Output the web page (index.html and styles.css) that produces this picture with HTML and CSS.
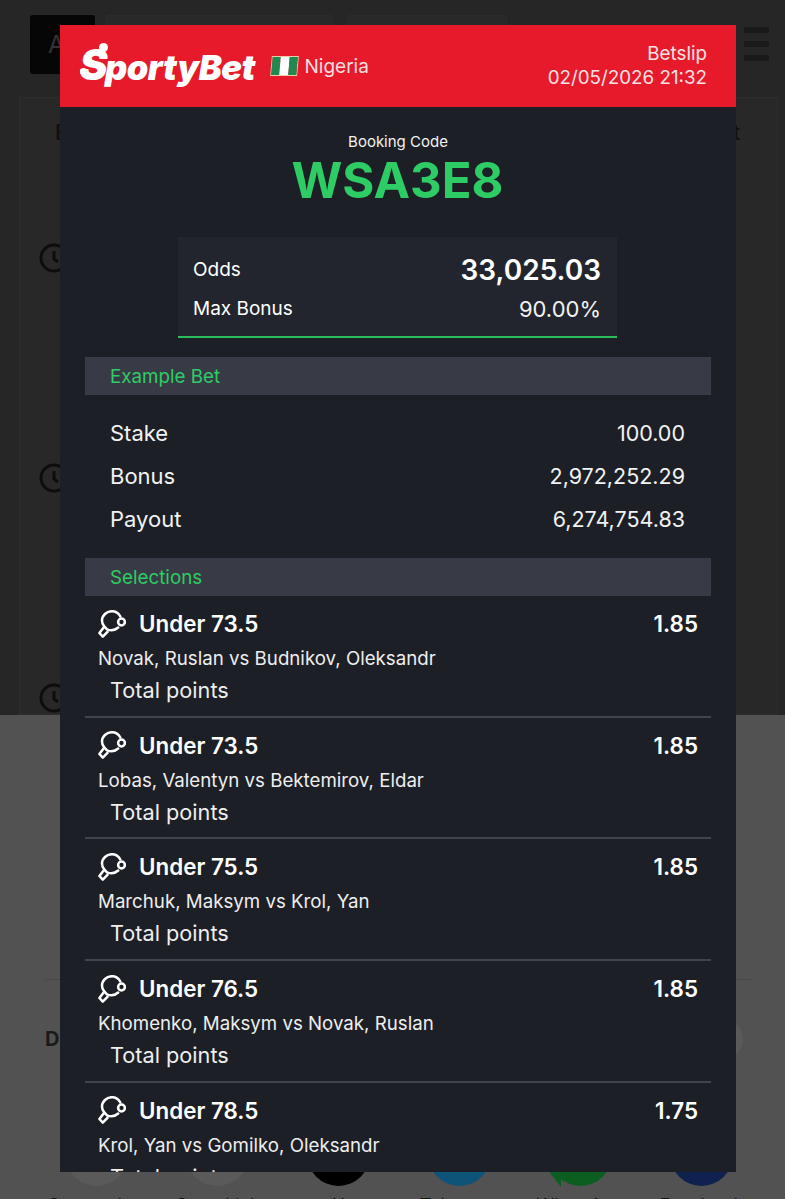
FILE: index.html
```html
<!DOCTYPE html>
<html lang="en">
<head>
  <meta charset="UTF-8" />
  <meta name="viewport" content="width=device-width, initial-scale=1.0"/>
  <title>SportyBet Betslip</title>
  <link rel="stylesheet" href="styles.css">
</head>
<body>
  <svg class="defs" width="0" height="0">
    <symbol id="paddle" viewBox="0 0 28 28">
      <path d="M22.300 6.500C20.500 3 17.500 1.200 14 1.200 8.500 1.200 4 5.500 4 10.500c0 2.500.8 4.500 2.300 6L9 19.300c1.500.7 3 1 4.500 1 2.500 0 4.500-.8 6.700-2.800" fill="none" stroke="currentColor" stroke-width="2.500" stroke-linecap="round" stroke-linejoin="round"/>
      <circle cx="23.500" cy="12" r="3.400" fill="none" stroke="currentColor" stroke-width="2.500"/>
      <path d="M5.800 17.300 1.400 23l3.400 3.600 5.400-5.400" fill="none" stroke="currentColor" stroke-width="2.500" stroke-linejoin="round"/>
    </symbol>
    <symbol id="clock" viewBox="0 0 30 30">
      <circle cx="15" cy="15" r="13" fill="none" stroke="currentColor" stroke-width="3"/>
      <path d="M15 8v8l4 3" fill="none" stroke="currentColor" stroke-width="3"/>
    </symbol>
  </svg>

  <!-- page behind the popup -->
  <div class="page">
    <div class="page-top">
      <div class="topbar">
        <div class="top-btn">A</div>
        <div class="top-box wide"></div>
        <div class="top-box"></div>
        <div class="burger"><i></i><i></i><i></i></div>
      </div>
      <div class="panel">
        <div class="panel-head"><span>B</span><span>t</span></div>
        <svg class="clock"><use href="#clock"/></svg>
        <svg class="clock"><use href="#clock"/></svg>
        <svg class="clock"><use href="#clock"/></svg>
      </div>
    </div>
    <div class="page-bottom">
      <div class="share-head"><b>D</b><span class="close-dot"></span></div>
      <div class="share-row">
        <div class="share"><span class="dot grey"></span>Screenshot</div>
        <div class="share"><span class="dot grey"></span>Copy Link</div>
        <div class="share"><span class="dot black"></span>X</div>
        <div class="share"><span class="dot blue"></span>Telegram</div>
        <div class="share"><span class="dot green"></span>WhatsApp</div>
        <div class="share"><span class="dot navy"></span>Facebook</div>
      </div>
    </div>
  </div>

  <div class="modal">
    <header class="modal-head">
      <div class="brand">
        <span class="logo"><span class="logo-s">S</span>portyBet</span>
        <span class="flag"><i></i><i></i><i></i></span>
        <span class="country">Nigeria</span>
      </div>
      <div class="stamp">Betslip<br>02/05/2026 21:32</div>
    </header>

    <div class="modal-body">
      <div class="code-label">Booking Code</div>
      <div class="code">WSA3E8</div>

      <div class="odds-box">
        <div class="odds-row"><span>Odds</span><strong>33,025.03</strong></div>
        <div class="odds-row"><span>Max Bonus</span><span class="bonus">90.00%</span></div>
      </div>

      <div class="bar first-bar">Example Bet</div>
      <div class="example">
        <div class="ex-row"><span>Stake</span><span class="ex-val">100.00</span></div>
        <div class="ex-row"><span>Bonus</span><span class="ex-val">2,972,252.29</span></div>
        <div class="ex-row"><span>Payout</span><span class="ex-val">6,274,754.83</span></div>
      </div>

      <div class="bar">Selections</div>
      <div class="sel">
        <div class="sel-top"><svg class="ico"><use href="#paddle"/></svg><span class="pick">Under 73.5</span><span class="price">1.85</span></div>
        <div class="match">Novak, Ruslan vs Budnikov, Oleksandr</div>
        <div class="market">Total points</div>
      </div>
      <div class="sel">
        <div class="sel-top"><svg class="ico"><use href="#paddle"/></svg><span class="pick">Under 73.5</span><span class="price">1.85</span></div>
        <div class="match">Lobas, Valentyn vs Bektemirov, Eldar</div>
        <div class="market">Total points</div>
      </div>
      <div class="sel">
        <div class="sel-top"><svg class="ico"><use href="#paddle"/></svg><span class="pick">Under 75.5</span><span class="price">1.85</span></div>
        <div class="match">Marchuk, Maksym vs Krol, Yan</div>
        <div class="market">Total points</div>
      </div>
      <div class="sel">
        <div class="sel-top"><svg class="ico"><use href="#paddle"/></svg><span class="pick">Under 76.5</span><span class="price">1.85</span></div>
        <div class="match">Khomenko, Maksym vs Novak, Ruslan</div>
        <div class="market">Total points</div>
      </div>
      <div class="sel">
        <div class="sel-top"><svg class="ico"><use href="#paddle"/></svg><span class="pick">Under 78.5</span><span class="price">1.75</span></div>
        <div class="match">Krol, Yan vs Gomilko, Oleksandr</div>
        <div class="market">Total points</div>
      </div>
    </div>
  </div>
</body>
</html>
```

FILE: styles.css
```css
* {
  box-sizing: border-box;
}
html, body {
  height: 100%;
}
body {
  margin: 0;
  font-family: 'Inter', 'Liberation Sans', sans-serif;
  background: #525252;
  overflow: hidden;
  position: relative;
}
.defs {
  display: block;
}

/* backdrop page */
.page {
  height: 100%;
  display: flex;
  flex-direction: column;
}
.page-top {
  height: 715px;
  flex: none;
  background: #262626;
  overflow: hidden;
}
.topbar {
  display: flex;
  height: 97px;
  padding: 15px 0 0 30px;
}
.top-btn {
  width: 65px;
  height: 59px;
  background: #060607;
  border-radius: 3px;
  color: #333;
  font-size: 24px;
  line-height: 59px;
  padding-left: 18px;
}
.top-box {
  width: 160px;
  height: 59px;
  margin-left: 14px;
  background: #292929;
  border: 1px solid #2c2c2c;
  border-radius: 3px;
}
.top-box.wide {
  width: 227px;
  margin-left: 11px;
}
.burger {
  width: 25px;
  margin: 12px 0 0 237px;
}
.burger i {
  display: block;
  height: 6px;
  margin-bottom: 8px;
  background: #1a1a1a;
}
.panel {
  margin: 0 7px 0 19px;
  height: 618px;
  border: 1px solid #2d2d2d;
  background: #282828;
  padding: 0 19px;
}
.panel-head {
  display: flex;
  justify-content: space-between;
  padding: 22px 18px 0 16px;
  height: 145px;
  font-size: 21px;
  font-weight: 600;
  color: #111;
}
.clock {
  display: block;
  width: 30px;
  height: 30px;
  margin-bottom: 190px;
  color: #0d0d0d;
}
.page-bottom {
  flex: 1;
  background: #525252;
  padding: 264px 34px 0 45px;
}
.share-head {
  display: flex;
  justify-content: space-between;
  align-items: center;
  height: 118px;
  border-top: 1px solid #474747;
  font-size: 20px;
  color: #1a1a1a;
}
.close-dot {
  width: 42px;
  height: 42px;
  margin-right: 8px;
  border-radius: 50%;
  background: #5a5a5a;
}
.share-row {
  display: grid;
  grid-template-columns: repeat(6, 121px);
  margin: 26px 0 0 -9px;
}
.share {
  display: flex;
  flex-direction: column;
  align-items: center;
  font-size: 18px;
  line-height: 22px;
  color: #111;
  gap: 9px;
}
.dot {
  position: relative;
  width: 63px;
  height: 63px;
  border-radius: 50%;
  flex: none;
}
.grey { background: #5a5a5a; }
.black { background: #000; }
.blue { background: #0e5378; }
.green { background: #0b5e20; }
.navy { background: #0e214f; }
/* speech bubble tail of the whatsapp badge */
.green::after {
  content: "";
  position: absolute;
  left: -2px;
  bottom: -1px;
  border-style: solid;
  border-width: 18px 0 0 14px;
  border-color: #0b5e20 transparent transparent transparent;
}

/* popup */
.modal {
  position: absolute;
  left: 59.500px;
  top: 25px;
  width: 676.500px;
  height: 1147px;
  background: #1c1f26;
  color: #fff;
  overflow: hidden;
}
.modal-head {
  height: 82px;
  background: #e61a2a;
  display: flex;
  justify-content: space-between;
  align-items: center;
  padding: 0 29px 0 20px;
}
.brand {
  display: flex;
  align-items: center;
}
.logo {
  position: relative;
  width: 191px;
  font-size: 34.500px;
  line-height: 40px;
  font-weight: 900;
  font-style: italic;
  letter-spacing: -.500px;
}
.logo-s {
  font-size: 42px;
  margin-right: -2px;
}
.logo::before, .logo::after {
  content: "";
  position: absolute;
  background: #fff;
  border-radius: 50%;
}
.logo::before {
  left: 19px;
  top: -2px;
  width: 9px;
  height: 9px;
}
.logo::after {
  left: 0;
  top: 23px;
  width: 7px;
  height: 7px;
}
.flag {
  display: flex;
  width: 27px;
  height: 20px;
  border: 1px solid #e9cfa8;
  transform: skewX(-5deg);
}
.flag i {
  flex: 1;
  background: #1f8a50;
}
.flag i:nth-child(2) {
  background: #fff;
}
.country {
  margin-left: 7px;
  font-size: 19px;
  color: #f9dfe1;
}
.stamp {
  text-align: right;
  font-size: 18.800px;
  line-height: 24.500px;
  color: #fbe3e5;
}
.modal-body {
  padding: 0 25px 0 25.500px;
}
.code-label {
  margin-top: 26px;
  text-align: center;
  font-size: 15px;
  line-height: 18px;
  color: #f2f2f2;
}
.code {
  text-align: center;
  font-size: 49px;
  font-weight: 700;
  line-height: 60px;
  color: #2ecc64;
  margin-left: -1px;
}
.odds-box {
  width: 439px;
  height: 101px;
  margin: 26px 0 19px 93px;
  padding: 13px 16px 0 15px;
  background: #22252d;
  border-bottom: 2px solid #2ebd5c;
}
.odds-row {
  display: flex;
  justify-content: space-between;
  align-items: center;
  height: 39px;
  font-size: 19px;
}
.odds-row strong {
  font-size: 28px;
  font-weight: 600;
}
.bonus {
  font-size: 22px;
  color: #f2f2f2;
}
.bar {
  height: 38px;
  background: #383b45;
  color: #2ecc64;
  font-size: 18.800px;
  line-height: 39px;
  padding-left: 25px;
}
.example {
  padding: 16px 26px 0 25px;
  height: 163px;
}
.ex-row {
  display: flex;
  justify-content: space-between;
  align-items: center;
  height: 43px;
  font-size: 22px;
  color: #f2f2f2;
}
.ex-val {
  font-size: 21.500px;
}
.sel {
  height: 121.700px;
  padding: 0 13px;
  border-bottom: 2px solid #41444e;
}
.sel-top {
  display: flex;
  align-items: center;
  height: 51px;
  padding-top: 4px;
  font-size: 22.400px;
  font-weight: 600;
}
.ico {
  width: 28px;
  height: 28px;
  margin-right: 13px;
  color: #fff;
}
.price {
  margin-left: auto;
}
.match {
  font-size: 18.700px;
  line-height: 24px;
  color: #eee;
}
.market {
  margin: 6px 0 0 12px;
  font-size: 21.700px;
  line-height: 26px;
  color: #eee;
}
```
